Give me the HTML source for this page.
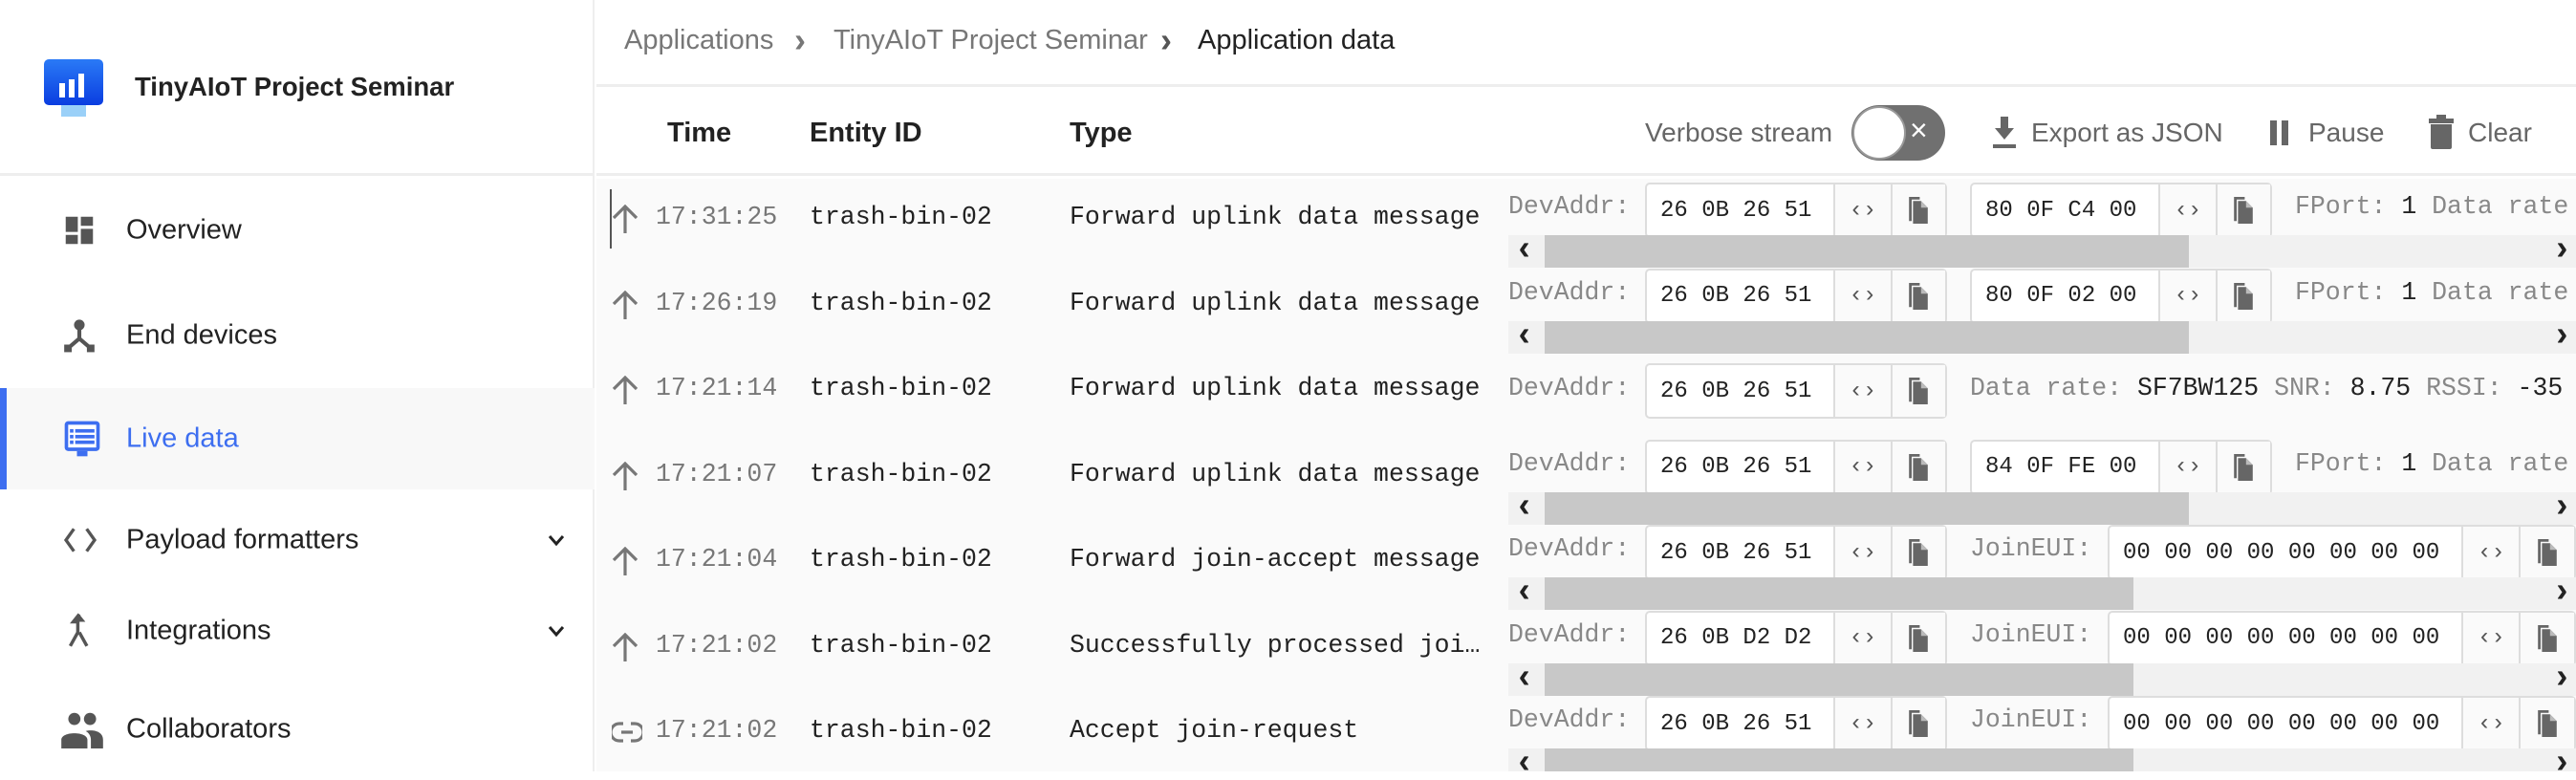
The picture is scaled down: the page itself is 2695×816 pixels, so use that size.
<!DOCTYPE html>
<html><head><meta charset="utf-8"><style>
*{box-sizing:border-box;margin:0;padding:0}
body{width:2695px;height:807px;overflow:hidden;background:#fff;font-family:"Liberation Sans",sans-serif;color:#222;position:relative}
.a{position:absolute;white-space:nowrap}
.side{position:absolute;left:0;top:0;width:622px;height:807px;background:#fff;border-right:2px solid #eee}
.nav{position:absolute;left:0;width:622px;height:106px}
.nav .t{position:absolute;left:132px;top:50%;transform:translateY(-50%);font-size:29px;color:#222}
.nav svg{position:absolute;left:64px;top:50%;transform:translateY(-50%)}
.main{position:absolute;left:624px;top:0;right:0;height:807px;background:#fafafa}
.mono{font-family:"Liberation Mono",monospace}
.row{position:absolute;left:0;width:2071px;height:90px}
.row .tm{position:absolute;left:62px;top:28px;font-size:26.5px;color:#777}
.row .ic{position:absolute;left:16px;top:30px}
.row .en{position:absolute;left:223px;top:28px;font-size:26.5px;color:#222}
.row .ty{position:absolute;left:495px;top:28px;font-size:26.5px;color:#222}
.lbl{position:absolute;top:17px;font-size:26.5px;color:#888}
.box{position:absolute;top:7px;height:58px;border:2px solid #ddd;border-radius:5px;background:#fff;display:flex}
.box .v{height:100%;display:flex;align-items:center;padding-left:14px;font-size:24px;color:#222;border-right:2px solid #ddd}
.box .b{width:58px;height:100%;display:flex;align-items:center;justify-content:center;background:#fafafa;color:#555;font-size:24px}
.box .b+.b{border-left:2px solid #ddd}
.sb{position:absolute;left:954px;top:62px;width:1117px;height:34px;background:#f1f1f1}
.sb .th{position:absolute;left:38px;top:0;height:34px;background:#c8c8c8}
.sb .l,.sb .r{position:absolute;top:-3px;font-size:36px;line-height:38px;color:#222;font-weight:bold}
.sb .l{left:6px}.sb .r{right:4px}
</style></head><body>
<svg width="0" height="0" style="position:absolute"><defs><symbol id="cp" viewBox="0 0 14 20"><path d="M0 0h8v2H2v16H0z" fill="#666"/><path d="M3 3h6l5 5v12H3z" fill="#666"/><path d="M9 3v5h5" fill="#bbb"/></symbol></defs></svg>
<div class="side">
  <div class="a" style="left:0;top:0;width:622px;height:184px;border-bottom:3px solid #eee"></div>
  <svg class="a" style="left:46px;top:62px" width="62" height="64" viewBox="0 0 62 64"><defs><linearGradient id="g" x1="0" y1="0" x2="0" y2="1"><stop offset="0" stop-color="#2a7af6"/><stop offset="1" stop-color="#0a3de0"/></linearGradient></defs><rect x="0" y="0" width="62" height="48" rx="5" fill="url(#g)"/><rect x="18" y="48" width="26" height="12" fill="#9ad0f8"/><rect x="16" y="25" width="6" height="15" fill="#fff"/><rect x="26" y="21" width="6" height="19" fill="#fff"/><rect x="36" y="15" width="6" height="25" fill="#fff"/></svg>
  <div class="a" style="left:141px;top:75px;font-size:27.5px;font-weight:bold;color:#222">TinyAIoT Project Seminar</div>

  <div class="nav" style="top:188px"><svg width="38" height="38" viewBox="0 0 24 24"><path fill="#555" d="M3 13h8V3H3zm0 8h8v-6H3zm10 0h8V11h-8zm0-18v6h8V3z"/></svg><div class="t">Overview</div></div>
  <div class="nav" style="top:298px"><svg width="38" height="38" viewBox="0 0 24 24"><circle cx="12" cy="5" r="3.5" fill="#555"/><path d="M12 8v6L5 20M12 14l7 6" stroke="#555" stroke-width="2.6" fill="none"/><rect x="2" y="18" width="5" height="5" fill="#555"/><rect x="17" y="18" width="5" height="5" fill="#555"/></svg><div class="t">End devices</div></div>
  <div class="nav" style="top:406px;background:#f8f8f8"><div class="a" style="left:0;top:0;width:7px;height:106px;background:#3d6ef0"></div><svg width="44" height="44" viewBox="0 0 24 24"><rect x="2" y="2" width="20" height="17" rx="2" fill="#3d6ef0"/><rect x="4" y="4" width="16" height="13" fill="#fff"/><rect x="9" y="19" width="6" height="3" fill="#3d6ef0"/><rect x="5" y="6.5" width="2" height="2" fill="#3d6ef0"/><rect x="8" y="6.5" width="11" height="2" fill="#3d6ef0"/><rect x="5" y="9.8" width="2" height="2" fill="#3d6ef0"/><rect x="8" y="9.8" width="11" height="2" fill="#3d6ef0"/><rect x="5" y="13" width="2" height="2" fill="#3d6ef0"/><rect x="8" y="13" width="11" height="2" fill="#3d6ef0"/></svg><div class="t" style="color:#3d6ef0">Live data</div></div>
  <div class="nav" style="top:512px"><svg width="40" height="40" viewBox="0 0 24 24"><path d="M8 5l-5 7 5 7M16 5l5 7-5 7" stroke="#555" stroke-width="2" fill="none"/></svg><div class="t">Payload formatters</div><svg style="left:570px" width="24" height="24" viewBox="0 0 24 24"><path d="M5 8l7 8 7-8" stroke="#222" stroke-width="3" fill="none"/></svg></div>
  <div class="nav" style="top:607px"><svg width="38" height="40" viewBox="0 0 24 24"><path d="M12 1l-4 5h3v7l-5 9M12 13l5 9" stroke="#555" stroke-width="2.2" fill="none"/><path d="M12 1l-4 5h8z" fill="#555"/></svg><div class="t">Integrations</div><svg style="left:570px" width="24" height="24" viewBox="0 0 24 24"><path d="M5 8l7 8 7-8" stroke="#222" stroke-width="3" fill="none"/></svg></div>
  <div class="nav" style="top:710px"><svg width="44" height="40" viewBox="0 0 24 22"><circle cx="7.5" cy="5" r="3.5" fill="#555"/><circle cx="16.5" cy="5" r="3.5" fill="#555"/><path d="M0 22v-5c0-5 15-5 15 0v5zM14 12c4-1 10 0 10 5v5h-7v-5c0-2-1-4-3-5z" fill="#555"/></svg><div class="t">Collaborators</div></div>
</div>

<div class="a" style="left:624px;top:0;width:2071px;height:91px;background:#fff;border-bottom:3px solid #eee"></div>
<div class="a" style="left:653px;top:26px;font-size:29px;color:#777">Applications</div>
<div class="a" style="left:831px;top:21px;font-size:36px;font-weight:bold;color:#777">›</div>
<div class="a" style="left:872px;top:26px;font-size:29px;color:#777">TinyAIoT Project Seminar</div>
<div class="a" style="left:1214px;top:21px;font-size:36px;font-weight:bold;color:#555">›</div>
<div class="a" style="left:1253px;top:26px;font-size:29px;color:#222">Application data</div>

<div class="a" style="left:624px;top:94px;width:2071px;height:90px;background:#fff;border-bottom:3px solid #eee"></div>
<div class="a" style="left:698px;top:123px;font-size:29px;font-weight:bold">Time</div>
<div class="a" style="left:847px;top:123px;font-size:29px;font-weight:bold">Entity ID</div>
<div class="a" style="left:1119px;top:123px;font-size:29px;font-weight:bold">Type</div>
<div class="a" style="left:1721px;top:123px;font-size:28px;color:#666">Verbose stream</div>
<div class="a" style="left:1937px;top:110px;width:98px;height:58px;border-radius:29px;background:#707070"></div>
<div class="a" style="left:1938px;top:111px;width:56px;height:56px;border-radius:28px;background:#fff;border:2px solid #999"></div>
<div class="a" style="left:1998px;top:118px;font-size:32px;color:#fff">×</div>
<svg class="a" style="left:2083px;top:122px" width="28" height="34" viewBox="0 0 14 17"><path d="M5 0h4v6h3l-5 6-5-6h3z" fill="#666"/><rect x="1" y="14.5" width="12" height="2" fill="#666"/></svg>
<div class="a" style="left:2125px;top:123px;font-size:28px;color:#666">Export as JSON</div>
<div class="a" style="left:2375px;top:126px;width:7px;height:26px;background:#666"></div>
<div class="a" style="left:2387px;top:126px;width:7px;height:26px;background:#666"></div>
<div class="a" style="left:2415px;top:123px;font-size:28px;color:#666">Pause</div>
<svg class="a" style="left:2541px;top:120px" width="26" height="36" viewBox="0 0 13 18"><rect x="4" y="0" width="5" height="2" fill="#666"/><rect x="0" y="2" width="13" height="2.5" fill="#666"/><path d="M1 5h11v12c0 .6-.4 1-1 1H2c-.6 0-1-.4-1-1z" fill="#666"/></svg>
<div class="a" style="left:2582px;top:123px;font-size:28px;color:#666">Clear</div>

<div class="main" style="top:187px;height:620px"></div>
<div class="a" style="left:624px;top:184px;width:2071px;height:623px;overflow:hidden">
<div class="row mono" style="top:0">
  <div class="a" style="left:14px;top:14px;width:2px;height:62px;background:#555"></div>
  <svg class="ic" width="28" height="30" viewBox="0 0 14 15"><path d="M7 1v14M1 7l6-6 6 6" stroke="#777" stroke-width="1.6" fill="none"/></svg>
  <div class="tm">17:31:25</div><div class="en">trash-bin-02</div><div class="ty">Forward uplink data message</div>
  <div class="lbl" style="left:954px">DevAddr:</div>
  <div class="box" style="left:1097px;width:316px"><div class="v" style="width:199px">26 0B 26 51</div><div class="b">‹›</div><div class="b"><svg width="20" height="28"><use href="#cp"/></svg></div></div>
  <div class="box" style="left:1437px;width:316px"><div class="v" style="width:199px">80 0F C4 00</div><div class="b">‹›</div><div class="b"><svg width="20" height="28"><use href="#cp"/></svg></div></div>
  <div class="lbl" style="left:1777px">FPort: <span style="color:#222">1</span>  Data rate</div>
  <div class="sb"><div class="th" style="width:674px"></div><span class="l">‹</span><span class="r">›</span></div>
</div>
<div class="row mono" style="top:89.5px">
  <svg class="ic" width="28" height="30" viewBox="0 0 14 15"><path d="M7 1v14M1 7l6-6 6 6" stroke="#777" stroke-width="1.6" fill="none"/></svg>
  <div class="tm">17:26:19</div><div class="en">trash-bin-02</div><div class="ty">Forward uplink data message</div>
  <div class="lbl" style="left:954px">DevAddr:</div>
  <div class="box" style="left:1097px;width:316px"><div class="v" style="width:199px">26 0B 26 51</div><div class="b">‹›</div><div class="b"><svg width="20" height="28"><use href="#cp"/></svg></div></div>
  <div class="box" style="left:1437px;width:316px"><div class="v" style="width:199px">80 0F 02 00</div><div class="b">‹›</div><div class="b"><svg width="20" height="28"><use href="#cp"/></svg></div></div>
  <div class="lbl" style="left:1777px">FPort: <span style="color:#222">1</span>  Data rate</div>
  <div class="sb"><div class="th" style="width:674px"></div><span class="l">‹</span><span class="r">›</span></div>
</div>
<div class="row mono" style="top:179px">
  <svg class="ic" width="28" height="30" viewBox="0 0 14 15"><path d="M7 1v14M1 7l6-6 6 6" stroke="#777" stroke-width="1.6" fill="none"/></svg>
  <div class="tm">17:21:14</div><div class="en">trash-bin-02</div><div class="ty">Forward uplink data message</div>
  <div class="lbl" style="left:954px;top:28px">DevAddr:</div>
  <div class="box" style="left:1097px;width:316px;top:17px"><div class="v" style="width:199px">26 0B 26 51</div><div class="b">‹›</div><div class="b"><svg width="20" height="28"><use href="#cp"/></svg></div></div>
  <div class="lbl" style="left:1437px;top:28px">Data rate: <span style="color:#222">SF7BW125</span> SNR: <span style="color:#222">8.75</span> RSSI: <span style="color:#222">-35</span></div>
</div>
<div class="row mono" style="top:268.5px">
  <svg class="ic" width="28" height="30" viewBox="0 0 14 15"><path d="M7 1v14M1 7l6-6 6 6" stroke="#777" stroke-width="1.6" fill="none"/></svg>
  <div class="tm">17:21:07</div><div class="en">trash-bin-02</div><div class="ty">Forward uplink data message</div>
  <div class="lbl" style="left:954px">DevAddr:</div>
  <div class="box" style="left:1097px;width:316px"><div class="v" style="width:199px">26 0B 26 51</div><div class="b">‹›</div><div class="b"><svg width="20" height="28"><use href="#cp"/></svg></div></div>
  <div class="box" style="left:1437px;width:316px"><div class="v" style="width:199px">84 0F FE 00</div><div class="b">‹›</div><div class="b"><svg width="20" height="28"><use href="#cp"/></svg></div></div>
  <div class="lbl" style="left:1777px">FPort: <span style="color:#222">1</span>  Data rate</div>
  <div class="sb"><div class="th" style="width:674px"></div><span class="l">‹</span><span class="r">›</span></div>
</div>
<div class="row mono" style="top:358px">
  <svg class="ic" width="28" height="30" viewBox="0 0 14 15"><path d="M7 1v14M1 7l6-6 6 6" stroke="#777" stroke-width="1.6" fill="none"/></svg>
  <div class="tm">17:21:04</div><div class="en">trash-bin-02</div><div class="ty">Forward join-accept message</div>
  <div class="lbl" style="left:954px">DevAddr:</div>
  <div class="box" style="left:1097px;width:316px"><div class="v" style="width:199px">26 0B 26 51</div><div class="b">‹›</div><div class="b"><svg width="20" height="28"><use href="#cp"/></svg></div></div>
  <div class="lbl" style="left:1437px">JoinEUI:</div>
  <div class="box" style="left:1581px;width:490px"><div class="v" style="width:372px">00 00 00 00 00 00 00 00</div><div class="b">‹›</div><div class="b"><svg width="20" height="28"><use href="#cp"/></svg></div></div>
  <div class="sb"><div class="th" style="width:616px"></div><span class="l">‹</span><span class="r">›</span></div>
</div>
<div class="row mono" style="top:447.5px">
  <svg class="ic" width="28" height="30" viewBox="0 0 14 15"><path d="M7 1v14M1 7l6-6 6 6" stroke="#777" stroke-width="1.6" fill="none"/></svg>
  <div class="tm">17:21:02</div><div class="en">trash-bin-02</div><div class="ty">Successfully processed joi…</div>
  <div class="lbl" style="left:954px">DevAddr:</div>
  <div class="box" style="left:1097px;width:316px"><div class="v" style="width:199px">26 0B D2 D2</div><div class="b">‹›</div><div class="b"><svg width="20" height="28"><use href="#cp"/></svg></div></div>
  <div class="lbl" style="left:1437px">JoinEUI:</div>
  <div class="box" style="left:1581px;width:490px"><div class="v" style="width:372px">00 00 00 00 00 00 00 00</div><div class="b">‹›</div><div class="b"><svg width="20" height="28"><use href="#cp"/></svg></div></div>
  <div class="sb"><div class="th" style="width:616px"></div><span class="l">‹</span><span class="r">›</span></div>
</div>
<div class="row mono" style="top:537px">
  <svg class="ic" style="top:34px" width="32" height="22" viewBox="0 0 16 11"><path d="M6 1H4a4.5 4.5 0 000 9h2M10 1h2a4.5 4.5 0 010 9h-2M5 5.5h6" stroke="#777" stroke-width="1.6" fill="none"/></svg>
  <div class="tm">17:21:02</div><div class="en">trash-bin-02</div><div class="ty">Accept join-request</div>
  <div class="lbl" style="left:954px">DevAddr:</div>
  <div class="box" style="left:1097px;width:316px"><div class="v" style="width:199px">26 0B 26 51</div><div class="b">‹›</div><div class="b"><svg width="20" height="28"><use href="#cp"/></svg></div></div>
  <div class="lbl" style="left:1437px">JoinEUI:</div>
  <div class="box" style="left:1581px;width:490px"><div class="v" style="width:372px">00 00 00 00 00 00 00 00</div><div class="b">‹›</div><div class="b"><svg width="20" height="28"><use href="#cp"/></svg></div></div>
  <div class="sb"><div class="th" style="width:616px"></div><span class="l">‹</span><span class="r">›</span></div>
</div>
</div>
</body></html>
